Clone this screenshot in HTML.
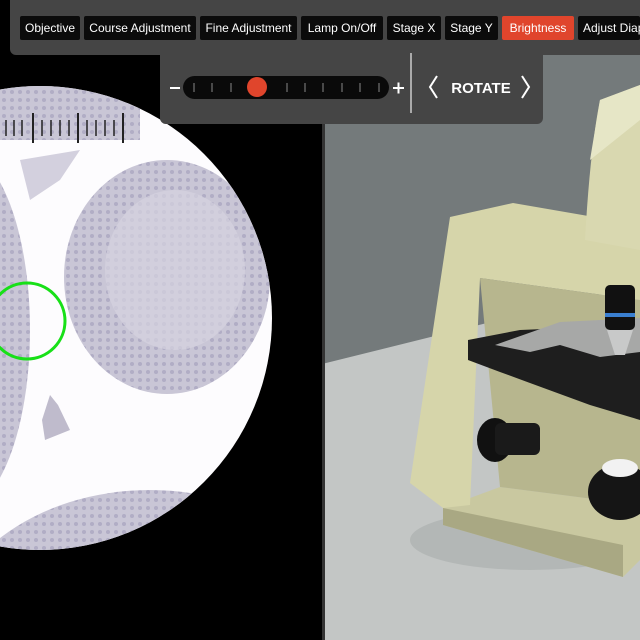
<!DOCTYPE html>
<html><head><style>
html,body{margin:0;width:640px;height:640px;overflow:hidden}
body{background:#000;font-family:"Liberation Sans",sans-serif;position:relative}
.top{position:absolute;left:10px;top:0;width:630px;height:55px;background:#454545;border-radius:0 0 0 6px}
.low{position:absolute;left:160px;top:50px;width:383px;height:74px;background:#454545;border-radius:0 0 6px 6px}
.b{position:absolute;top:16px;height:24px;background:#0b0b0b;color:#fff;font-size:12px;line-height:24px;text-align:center;border-radius:2px;white-space:nowrap;overflow:hidden}
.b.on{background:#e0452c}
</style></head><body>
<svg width="640" height="640" style="position:absolute;left:0;top:0">
<defs><clipPath id="c"><circle cx="40" cy="318" r="232"/></clipPath>
<pattern id="p" width="8" height="8" patternUnits="userSpaceOnUse"><rect width="8" height="8" fill="#c9c6d6"/><circle cx="4" cy="4" r="2" fill="#b1adc5"/></pattern></defs>
<circle cx="40" cy="318" r="232" fill="#fdfcfe"/>
<g clip-path="url(#c)">
<rect x="0" y="80" width="140" height="60" fill="url(#p)"/>
<ellipse cx="167" cy="277" rx="103" ry="117" fill="url(#p)"/>
<ellipse cx="175" cy="270" rx="70" ry="80" fill="#d6d3e0" opacity=".7"/>
<ellipse cx="-40" cy="330" rx="70" ry="180" fill="url(#p)"/>
<ellipse cx="150" cy="650" rx="210" ry="160" fill="url(#p)"/>
<path d="M50 395 L58 405 L70 430 L45 440 L42 420Z" fill="#bfbbcc"/>
<path d="M20 160 L80 150 L60 180 L30 200Z" fill="#d3d0de"/>
</g>
<g stroke="#222" stroke-width="1.5">
<line x1="6" y1="120" x2="6" y2="136"/><line x1="14" y1="120" x2="14" y2="136"/><line x1="22" y1="120" x2="22" y2="136"/><line x1="33" y1="113" x2="33" y2="143" stroke-width="2"/><line x1="42" y1="120" x2="42" y2="136"/><line x1="51" y1="120" x2="51" y2="136"/><line x1="60" y1="120" x2="60" y2="136"/><line x1="69" y1="120" x2="69" y2="136"/><line x1="78" y1="113" x2="78" y2="143" stroke-width="2"/><line x1="87" y1="120" x2="87" y2="136"/><line x1="96" y1="120" x2="96" y2="136"/><line x1="105" y1="120" x2="105" y2="136"/><line x1="114" y1="120" x2="114" y2="136"/><line x1="123" y1="113" x2="123" y2="143" stroke-width="2"/>
</g>
<circle cx="27" cy="321" r="38" fill="none" stroke="#18e018" stroke-width="3"/>
<rect x="322" y="0" width="318" height="640" fill="#747a7b"/>
<polygon points="322,364 640,285 640,640 322,640" fill="#c3c6c5"/>
<rect x="322" y="0" width="3" height="640" fill="#333"/>
<ellipse cx="530" cy="540" rx="120" ry="30" fill="#a9adac" opacity=".6"/>
<!-- base -->
<polygon points="443,508 500,487 640,505 640,560 623,577 443,525" fill="#c9c8a0"/>
<polygon points="443,508 623,545 623,577 443,525" fill="#a9a883"/>
<!-- arm -->
<polygon points="450,217 513,203 640,225 640,300 480,278 470,505 443,508 410,483" fill="#d6d5aa"/>
<polygon points="480,278 640,300 640,505 500,487" fill="#b7b68e"/>
<path d="M585,240 Q590,150 600,100 L640,85 L640,250 Z" fill="#d9d8b0"/>
<path d="M590,160 L600,100 L640,85 L640,120Z" fill="#e6e6c6"/>
<!-- stage -->
<polygon points="468,340 520,330 640,325 640,420 590,405 500,372 468,360" fill="#1e1e1e"/>
<polygon points="495,345 560,322 640,318 640,352 600,357 560,345 530,352" fill="#a7a8a7"/>
<rect x="605" y="285" width="30" height="45" rx="5" fill="#111"/>
<rect x="605" y="313" width="30" height="4" fill="#3a7fd0"/>
<polygon points="607,330 633,330 625,355 615,355" fill="#c8c9c9"/>
<!-- knobs -->
<ellipse cx="495" cy="440" rx="18" ry="22" fill="#111"/>
<rect x="495" y="423" width="45" height="32" rx="6" fill="#1a1a1a"/>
<ellipse cx="620" cy="492" rx="32" ry="28" fill="#151515"/>
<ellipse cx="620" cy="468" rx="18" ry="9" fill="#f2f2f2"/>
</svg>
<div class="top"></div>
<div class="low"></div>
<div class="b" style="left:20px;width:60px">Objective</div>
<div class="b" style="left:84px;width:112px">Course Adjustment</div>
<div class="b" style="left:200px;width:97px">Fine Adjustment</div>
<div class="b" style="left:301px;width:82px">Lamp On/Off</div>
<div class="b" style="left:387px;width:54px">Stage X</div>
<div class="b" style="left:445px;width:53px">Stage Y</div>
<div class="b on" style="left:502px;width:72px">Brightness</div>
<div class="b" style="left:578px;width:57px;text-align:left;padding-left:5px">Adjust Diaphragm</div>
<svg width="640" height="130" style="position:absolute;left:0;top:0">
<line x1="170" y1="88" x2="180" y2="88" stroke="#fff" stroke-width="2"/>
<rect x="183" y="76" width="206" height="23" rx="11.5" fill="#0a0a0a"/>
<g stroke="#888" stroke-width="1"><line x1="194" y1="83" x2="194" y2="92"/><line x1="212" y1="83" x2="212" y2="92"/><line x1="231" y1="83" x2="231" y2="92"/><line x1="287" y1="83" x2="287" y2="92"/><line x1="305" y1="83" x2="305" y2="92"/><line x1="323" y1="83" x2="323" y2="92"/><line x1="342" y1="83" x2="342" y2="92"/><line x1="360" y1="83" x2="360" y2="92"/><line x1="379" y1="83" x2="379" y2="92"/></g>
<circle cx="257" cy="87" r="10" fill="#e0452c"/>
<path d="M393 88h11M398.5 82.5v11" stroke="#fff" stroke-width="2"/>
<line x1="411" y1="53" x2="411" y2="113" stroke="#ccc" stroke-width="1.5"/>
<path d="M437 76 L430 87 L437 98" fill="none" stroke="#fff" stroke-width="2"/>
<path d="M522 76 L529 87 L522 98" fill="none" stroke="#fff" stroke-width="2"/>
<text x="481" y="93" text-anchor="middle" fill="#fff" font-family="Liberation Sans" font-weight="bold" font-size="15">ROTATE</text>
</svg>
</body></html>
